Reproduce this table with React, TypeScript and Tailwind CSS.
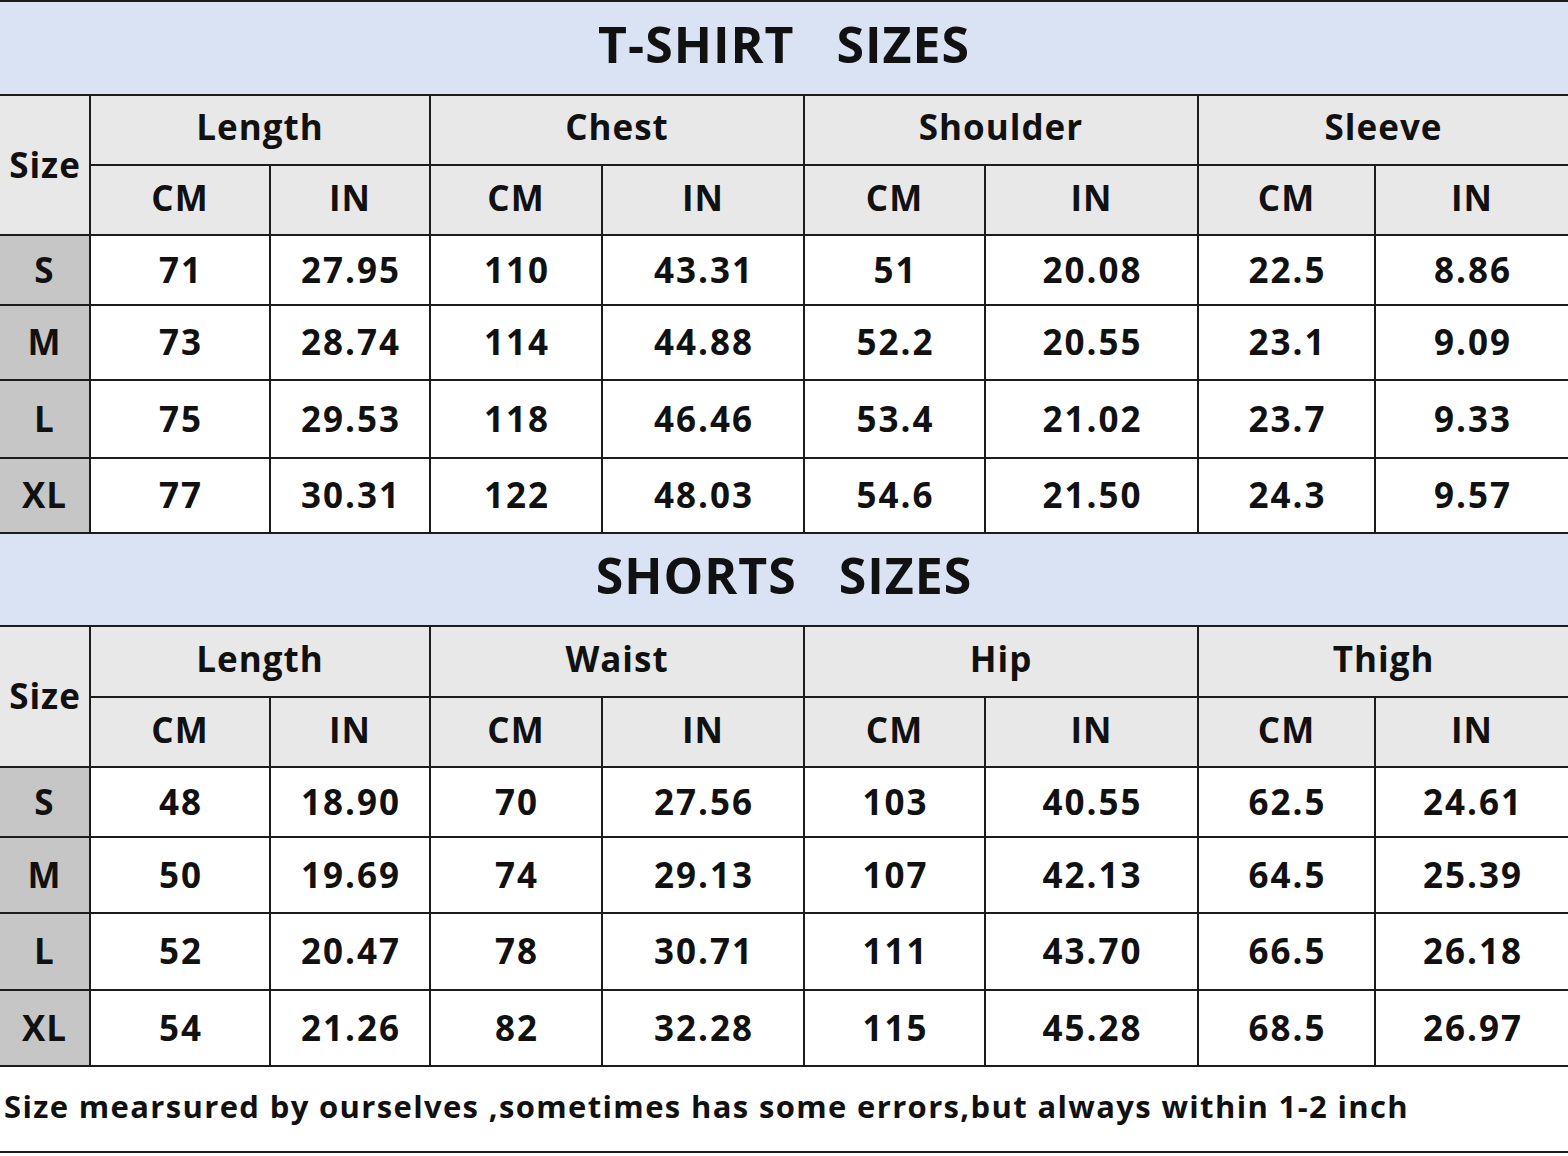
import React from "react";

type Section = {
  title: string;
  groups: string[];
  rows: { size: string; vals: string[]; h: string }[];
  heights: string[];
};

const tshirt: Section = {
  title: "T-SHIRT   SIZES",
  groups: ["Length", "Chest", "Shoulder", "Sleeve"],
  heights: ["h-[94px]", "h-[70px]", "h-[70px]"],
  rows: [
    { size: "S", h: "h-[70px]", vals: ["71", "27.95", "110", "43.31", "51", "20.08", "22.5", "8.86"] },
    { size: "M", h: "h-[75px]", vals: ["73", "28.74", "114", "44.88", "52.2", "20.55", "23.1", "9.09"] },
    { size: "L", h: "h-[78px]", vals: ["75", "29.53", "118", "46.46", "53.4", "21.02", "23.7", "9.33"] },
    { size: "XL", h: "h-[75px]", vals: ["77", "30.31", "122", "48.03", "54.6", "21.50", "24.3", "9.57"] }
  ]
};

const shorts: Section = {
  title: "SHORTS   SIZES",
  groups: ["Length", "Waist", "Hip", "Thigh"],
  heights: ["h-[93px]", "h-[71px]", "h-[70px]"],
  rows: [
    { size: "S", h: "h-[70px]", vals: ["48", "18.90", "70", "27.56", "103", "40.55", "62.5", "24.61"] },
    { size: "M", h: "h-[76px]", vals: ["50", "19.69", "74", "29.13", "107", "42.13", "64.5", "25.39"] },
    { size: "L", h: "h-[77px]", vals: ["52", "20.47", "78", "30.71", "111", "43.70", "66.5", "26.18"] },
    { size: "XL", h: "h-[76px]", vals: ["54", "21.26", "82", "32.28", "115", "45.28", "68.5", "26.97"] }
  ]
};

const cell = "border-2 border-[#1c1c1c] text-center align-middle p-0";

function SectionRows({ s }: { s: Section }) {
  return (
    <>
      <tr className={s.heights[0]}>
        <td
          colSpan={9}
          className={`${cell} border-x-0 bg-[#dae3f3] text-[50px] tracking-[1px] whitespace-pre pb-[8px]`}
        >
          {s.title}
        </td>
      </tr>
      <tr className={s.heights[1]}>
        <td rowSpan={2} className={`${cell} border-l-0 bg-[#e8e8e8] text-[35px] tracking-[1px] pl-[1px]`}>
          Size
        </td>
        {s.groups.map((g, i) => (
          <td
            key={g}
            colSpan={2}
            className={`${cell} bg-[#e8e8e8] text-[35px] tracking-[1px] pb-[5px] ${i === 3 ? "border-r-0" : ""}`}
          >
            {g}
          </td>
        ))}
      </tr>
      <tr className={s.heights[2]}>
        {s.groups.flatMap((g, i) => [
          <td key={g + "cm"} className={`${cell} bg-[#e8e8e8] text-[35px] tracking-[1px] pb-[3px]`}>
            CM
          </td>,
          <td
            key={g + "in"}
            className={`${cell} bg-[#e8e8e8] text-[35px] tracking-[1px] pb-[3px] ${i === 3 ? "border-r-0" : ""}`}
          >
            IN
          </td>
        ])}
      </tr>
      {s.rows.map((r) => (
        <tr key={r.size} className={r.h}>
          <td className={`${cell} border-l-0 bg-[#c6c6c6] text-[35px] tracking-[1px]`}>{r.size}</td>
          {r.vals.map((v, i) => (
            <td
              key={i}
              className={`${cell} bg-white text-[35px] tracking-[2px] pl-[2px] ${i === 7 ? "border-r-0" : ""}`}
            >
              {v}
            </td>
          ))}
        </tr>
      ))}
    </>
  );
}

export default function App() {
  const widths = [90, 180, 160, 172, 202, 181, 213, 177, 193];
  return (
    <div className="w-[1568px] h-[1156px] bg-white overflow-hidden text-[#111] font-bold [font-family:'Open_Sans',sans-serif]">
      <table className="w-[1568px] table-fixed border-collapse">
        <colgroup>
          {widths.map((w, i) => (
            <col key={i} style={{ width: w }} />
          ))}
        </colgroup>
        <tbody>
          <SectionRows s={tshirt} />
          <SectionRows s={shorts} />
          <tr className="h-[86px]">
            <td
              colSpan={9}
              className="border-2 border-x-0 border-[#1c1c1c] text-left align-middle pl-[4px] pb-[6px] text-[31px] tracking-[1.35px]"
            >
              Size mearsured by ourselves ,sometimes has some errors,but always within 1-2 inch
            </td>
          </tr>
        </tbody>
      </table>
    </div>
  );
}
